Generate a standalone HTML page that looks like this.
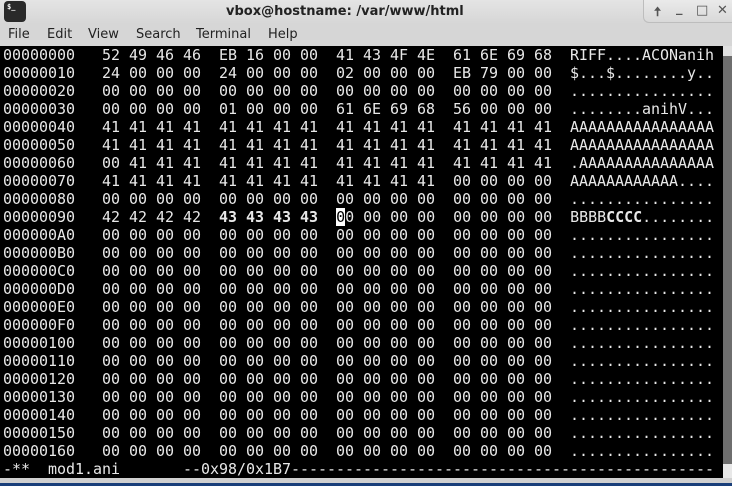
<!DOCTYPE html>
<html><head><meta charset="utf-8"><style>
*{margin:0;padding:0;box-sizing:border-box}
body{width:732px;height:486px;overflow:hidden;background:#d6d6d6;position:relative;font-family:"DejaVu Sans","Liberation Sans",sans-serif}
#title{position:absolute;left:0;top:0;width:732px;height:24px;background:linear-gradient(#e4e4e4,#d6d6d6)}
#title .t{position:absolute;left:226px;top:4px;font-size:13px;font-weight:bold;color:#222;}
#icon{position:absolute;left:4px;top:1px;width:22px;height:21px;background:#2a2a2a;border-radius:4px;color:#fff;font:bold 7px "DejaVu Sans Mono",monospace;padding:2px 0 0 3px}
#btns{position:absolute;left:643px;top:0;width:89px;height:23px;background:linear-gradient(#eaeaea,#d9d9d9);border:1px solid #bdbdbd;border-top:none;border-right:none;border-bottom-left-radius:6px;font-size:13px;font-weight:bold;color:#555}
#btns span{position:absolute;top:3px}
#menu{position:absolute;top:27px;left:0;font-size:13px;color:#222}
#menu span{position:absolute;white-space:nowrap}
#term{position:absolute;left:0;top:46px;width:723px;height:432px;background:#000;color:#e8e8e8;font:15px/18px "DejaVu Sans Mono",monospace;white-space:pre;padding-left:3px;letter-spacing:-0.03px;overflow:hidden}
#sb{position:absolute;left:723px;top:46px;width:9px;height:432px;background:#6e6e6e}
#sb .a{position:absolute;left:0;top:0;width:9px;height:10px;background:#e0e0e0}
#sb .b{position:absolute;left:0;bottom:0;width:9px;height:14px;background:#e8e8e8}
#bot1{position:absolute;left:0;top:478px;width:732px;height:5px;background:#d0d0d0}
#bot2{position:absolute;left:0;top:483px;width:732px;height:3px;background:#1a3f7a}
b{font-weight:bold}
.cur{background:#fff;color:#000}
</style></head><body>
<div id="title"><div id="icon">$_</div><div class="t">vbox@hostname: /var/www/html</div>
<div id="btns"><span style="left:10px">🠅</span><span style="left:32px;top:1px">_</span><span style="left:52px">□</span><span style="left:73px">✕</span></div></div>
<div id="menu"><span style="left:8px">File</span><span style="left:47px">Edit</span><span style="left:88px">View</span><span style="left:136px">Search</span><span style="left:196px">Terminal</span><span style="left:268px">Help</span></div>
<div id="term">00000000   52 49 46 46  EB 16 00 00  41 43 4F 4E  61 6E 69 68  RIFF....ACONanih
00000010   24 00 00 00  24 00 00 00  02 00 00 00  EB 79 00 00  $...$........y..
00000020   00 00 00 00  00 00 00 00  00 00 00 00  00 00 00 00  ................
00000030   00 00 00 00  01 00 00 00  61 6E 69 68  56 00 00 00  ........anihV...
00000040   41 41 41 41  41 41 41 41  41 41 41 41  41 41 41 41  AAAAAAAAAAAAAAAA
00000050   41 41 41 41  41 41 41 41  41 41 41 41  41 41 41 41  AAAAAAAAAAAAAAAA
00000060   00 41 41 41  41 41 41 41  41 41 41 41  41 41 41 41  .AAAAAAAAAAAAAAA
00000070   41 41 41 41  41 41 41 41  41 41 41 41  00 00 00 00  AAAAAAAAAAAA....
00000080   00 00 00 00  00 00 00 00  00 00 00 00  00 00 00 00  ................
00000090   42 42 42 42  <b>43 43 43 43</b>  <span class="cur">0</span>0 00 00 00  00 00 00 00  BBBB<b>CCCC</b>........
000000A0   00 00 00 00  00 00 00 00  00 00 00 00  00 00 00 00  ................
000000B0   00 00 00 00  00 00 00 00  00 00 00 00  00 00 00 00  ................
000000C0   00 00 00 00  00 00 00 00  00 00 00 00  00 00 00 00  ................
000000D0   00 00 00 00  00 00 00 00  00 00 00 00  00 00 00 00  ................
000000E0   00 00 00 00  00 00 00 00  00 00 00 00  00 00 00 00  ................
000000F0   00 00 00 00  00 00 00 00  00 00 00 00  00 00 00 00  ................
00000100   00 00 00 00  00 00 00 00  00 00 00 00  00 00 00 00  ................
00000110   00 00 00 00  00 00 00 00  00 00 00 00  00 00 00 00  ................
00000120   00 00 00 00  00 00 00 00  00 00 00 00  00 00 00 00  ................
00000130   00 00 00 00  00 00 00 00  00 00 00 00  00 00 00 00  ................
00000140   00 00 00 00  00 00 00 00  00 00 00 00  00 00 00 00  ................
00000150   00 00 00 00  00 00 00 00  00 00 00 00  00 00 00 00  ................
00000160   00 00 00 00  00 00 00 00  00 00 00 00  00 00 00 00  ................
-**  mod1.ani       --0x98/0x1B7-----------------------------------------------</div>
<div id="sb"><div class="a"></div><div class="b"></div></div>
<div id="bot1"></div><div id="bot2"></div>
</body></html>
